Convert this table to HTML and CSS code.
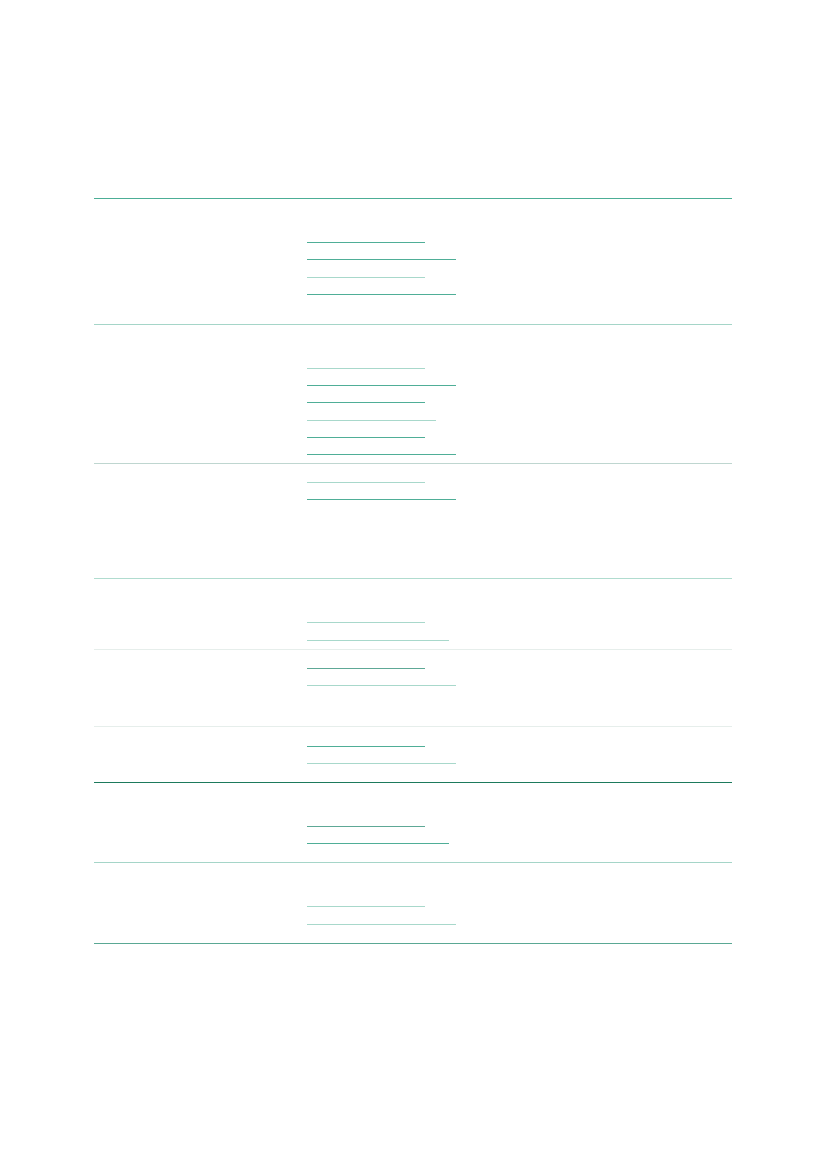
FILE: index.html
```html
<!DOCTYPE html>
<html lang="en">
<head>
<meta charset="utf-8">
<title>Table</title>
<link rel="stylesheet" href="styles.css">
</head>
<body>
<div class="table">
  <div class="row r1 b-teal">
    <div class="cell"></div>
    <div class="cell mid">
      <ul class="links">
        <li><span class="u w-s"></span></li>
        <li><span class="u w-l"></span></li>
        <li><span class="u w-s light"></span></li>
        <li><span class="u w-l"></span></li>
      </ul>
    </div>
    <div class="cell"></div>
  </div>
  <div class="row r2 b-light2">
    <div class="cell"></div>
    <div class="cell mid">
      <ul class="links">
        <li><span class="u w-s light"></span></li>
        <li><span class="u w-l"></span></li>
        <li><span class="u w-s"></span></li>
        <li><span class="u w-m light"></span></li>
        <li><span class="u w-s"></span></li>
        <li><span class="u w-l"></span></li>
      </ul>
    </div>
    <div class="cell"></div>
  </div>
  <div class="row r3 b-grey">
    <div class="cell"></div>
    <div class="cell mid tight">
      <ul class="links">
        <li><span class="u w-s light"></span></li>
        <li><span class="u w-l"></span></li>
      </ul>
    </div>
    <div class="cell"></div>
  </div>
  <div class="row r4 b-light">
    <div class="cell"></div>
    <div class="cell mid">
      <ul class="links">
        <li><span class="u w-s light"></span></li>
        <li><span class="u w-ml light"></span></li>
      </ul>
    </div>
    <div class="cell"></div>
  </div>
  <div class="row r5 b-faint">
    <div class="cell"></div>
    <div class="cell mid tight">
      <ul class="links">
        <li><span class="u w-s mid-c"></span></li>
        <li><span class="u w-l light"></span></li>
      </ul>
    </div>
    <div class="cell"></div>
  </div>
  <div class="row r6 b-faint">
    <div class="cell"></div>
    <div class="cell mid tight">
      <ul class="links">
        <li><span class="u w-s"></span></li>
        <li><span class="u w-l light"></span></li>
      </ul>
    </div>
    <div class="cell"></div>
  </div>
  <div class="row r7 b-dark">
    <div class="cell"></div>
    <div class="cell mid">
      <ul class="links">
        <li><span class="u w-s mid-c"></span></li>
        <li><span class="u w-ml"></span></li>
      </ul>
    </div>
    <div class="cell"></div>
  </div>
  <div class="row r8 b-light2 last">
    <div class="cell"></div>
    <div class="cell mid">
      <ul class="links">
        <li><span class="u w-s light"></span></li>
        <li><span class="u w-l light"></span></li>
      </ul>
    </div>
    <div class="cell"></div>
  </div>
</div>
</body>
</html>
```

FILE: styles.css
```css
html, body {
  margin: 0;
  padding: 0;
  background: #ffffff;
  font-family: "Liberation Sans", Arial, sans-serif;
}

.table {
  margin: 198px 0 0 94px;
  width: 638px;
}

.row {
  display: grid;
  grid-template-columns: 191px 256px 191px;
  box-sizing: border-box;
  border-top: 1px solid #4cae96;
}

.b-teal { border-top: 1px solid #4cae96; }
.b-light2 { border-top: 1.5px solid #a5d5c8; }
.b-grey { border-top: 1px solid #bfd6d0; }
.b-light { border-top: 1px solid #b0dccf; }
.b-faint { border-top: 1px solid #e6eeeb; }
.b-dark { border-top: 1.3px solid #1d7a5c; }

.last { border-bottom: 1px solid #5aa894; }

.r1 { height: 125.5px; }
.r2 { height: 139.5px; }
.r3 { height: 115.2px; }
.r4 { height: 70.8px; }
.r5 { height: 77.4px; }
.r6 { height: 55.3px; }
.r7 { height: 80.8px; }
.r8 { height: 81.5px; }

.cell {
  min-width: 0;
}

.mid {
  padding: 26.7px 0 0 22px;
}

.mid.tight {
  padding-top: 1.8px;
}

.links {
  list-style: none;
  margin: 0;
  padding: 0;
}

.links li {
  height: 17.33px;
  display: flex;
  align-items: flex-end;
}

.u {
  display: block;
  height: 0;
  border-bottom: 1px solid #4fae97;
}

.u.light { border-bottom-color: #a8d8cb; }
.u.mid-c { border-bottom-color: #5ea896; }

.w-s { width: 118px; }
.w-m { width: 129px; }
.w-ml { width: 142px; }
.w-l { width: 149px; }
```
